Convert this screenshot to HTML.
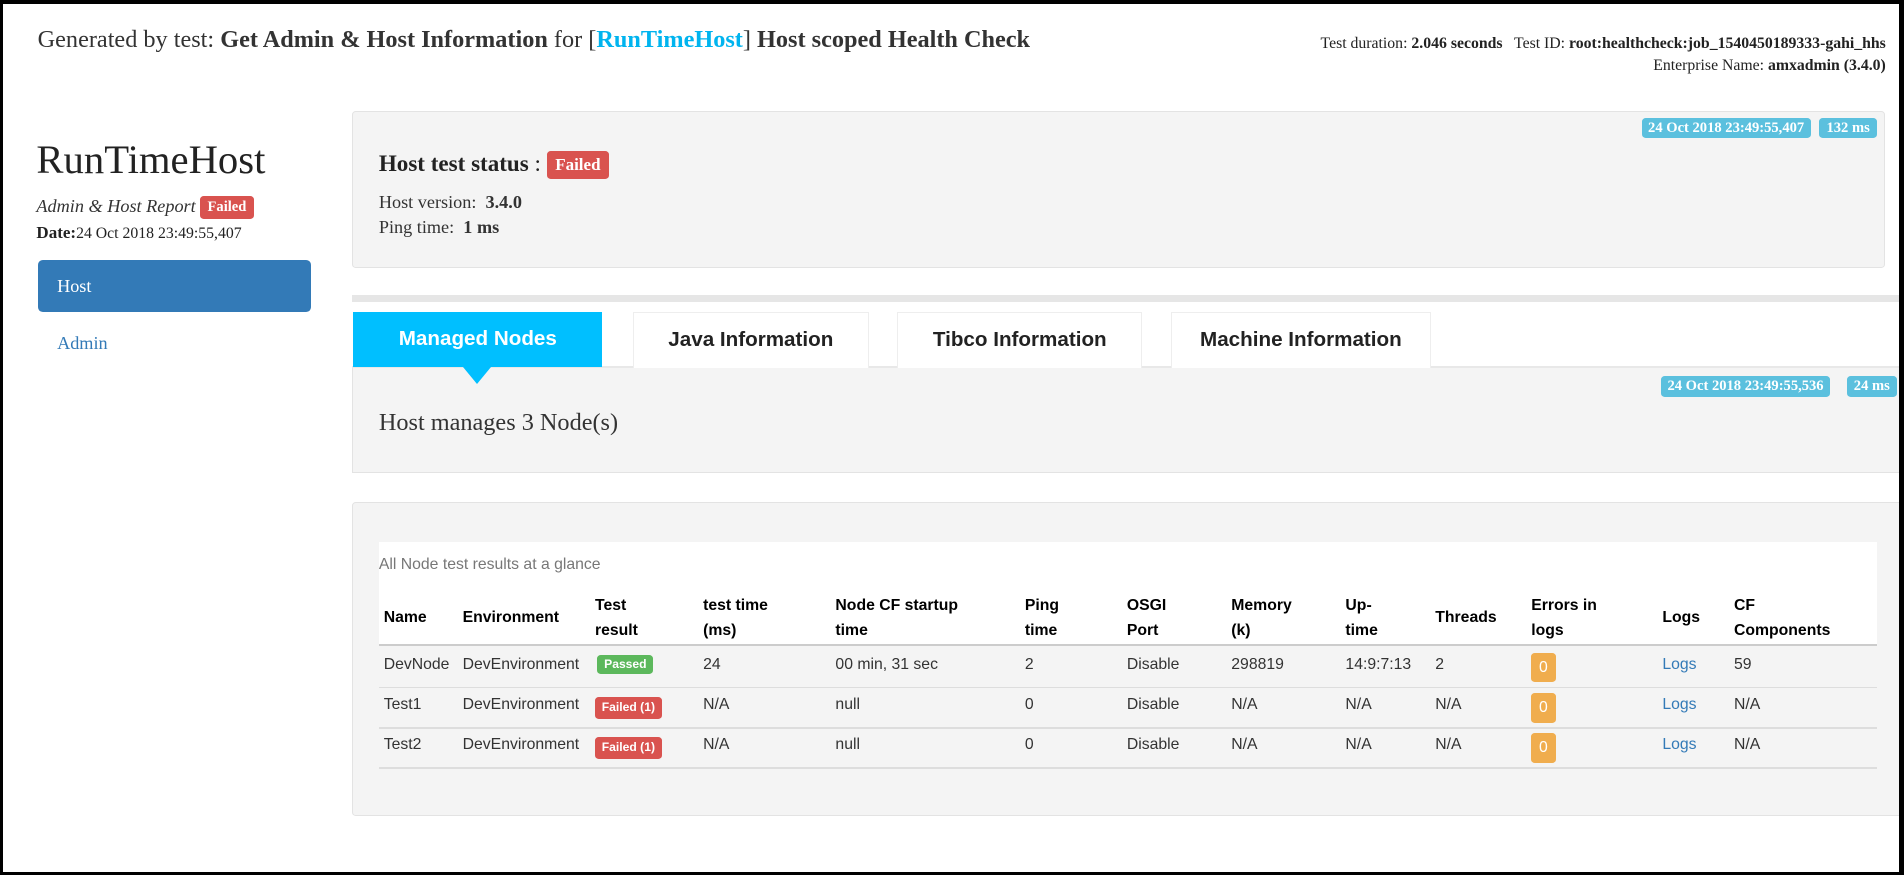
<!DOCTYPE html>
<html><head><meta charset="utf-8"><style>
html,body{margin:0;padding:0;background:#fff;}
body{width:1904px;height:875px;overflow:hidden;position:relative;}
#w{zoom:1.21429;position:absolute;left:0;top:0;width:1568px;height:721px;font-family:"Liberation Serif",serif;color:#333;}
.a{position:absolute;white-space:nowrap;}
.bd{position:absolute;background:#000;z-index:9;}
.lbl{display:inline-block;color:#fff;font-weight:bold;border-radius:3px;text-align:center;}
.info{position:absolute;background:#5bc0de;color:#fff;font-weight:bold;font-size:12px;height:17px;line-height:17px;border-radius:3px;text-align:center;font-family:"Liberation Serif",serif;}
.panel{position:absolute;background:#f4f4f4;border:1px solid #e3e3e3;border-radius:3px;}
.tab{position:absolute;top:257px;height:45px;line-height:45px;background:#fff;border:1px solid #eee;border-bottom:none;font-family:"Liberation Sans",sans-serif;font-weight:bold;font-size:17px;color:#222;text-align:center;}
.t{font-family:"Liberation Sans",sans-serif;font-size:13px;color:#333;}
.th{font-weight:bold;color:#000;line-height:21px;}
.err{position:absolute;width:20px;height:24px;background:#f0ad4e;border-radius:3px;color:#fff;text-align:center;line-height:24px;font-family:"Liberation Sans",sans-serif;font-size:13px;}
.hl{position:absolute;left:312px;width:1234px;height:1px;background:#ddd;}
</style></head><body>
<div class="bd" style="left:0;top:0;width:1904px;height:4px"></div>
<div class="bd" style="left:0;top:0;width:3px;height:875px"></div>
<div class="bd" style="left:0;bottom:0;width:1904px;height:3px"></div>
<div class="bd" style="right:0;top:0;width:5px;height:875px"></div>
<div id="w">
<div class="a" style="left:31px;top:21px;font-size:20px;">Generated by test: <b>Get Admin &amp; Host Information</b> for [<b style="color:#00b4ef">RunTimeHost</b>] <b>Host scoped Health Check</b></div>
<div class="a" style="right:15px;top:27px;font-size:13px;text-align:right;line-height:18px;color:#222">Test duration: <b>2.046 seconds</b> &nbsp; Test ID: <b>root:healthcheck:job_1540450189333-gahi_hhs</b><br>Enterprise Name: <b>amxadmin (3.4.0)</b></div>

<div class="a" style="left:30px;top:112px;font-size:33.5px;color:#222">RunTimeHost</div>
<div class="a" style="left:30px;top:161px;font-size:15px;font-style:italic">Admin &amp; Host Report <span class="lbl" style="background:#d9534f;font-style:normal;font-size:12px;padding:0 6px;height:19px;line-height:19px;vertical-align:1px">Failed</span></div>
<div class="a" style="left:30px;top:184px;font-size:13px;color:#222"><b style="font-size:14px">Date:</b>24 Oct 2018 23:49:55,407</div>
<div class="a" style="left:31px;top:214px;width:225px;height:43px;background:#337ab7;border-radius:4px;color:#fff;font-size:15px;line-height:43px;"><span style="margin-left:16px">Host</span></div>
<div class="a" style="left:47px;top:274px;font-size:15px;color:#337ab7">Admin</div>

<div class="panel" style="left:290px;top:91px;width:1261px;height:128px;"></div>
<div class="info" style="left:1352px;top:97px;width:139px;">24 Oct 2018 23:49:55,407</div>
<div class="info" style="left:1498px;top:97px;width:48px;">132 ms</div>
<div class="a" style="left:312px;top:123px;font-size:19px;font-weight:bold;color:#222;line-height:24px">Host test status <span style="font-weight:normal">:</span> <span class="lbl" style="background:#d9534f;font-size:14px;padding:0 7px;height:23px;line-height:23px;vertical-align:1px">Failed</span></div>
<div class="a" style="left:312px;top:158px;font-size:15px;">Host version: &nbsp;<b>3.4.0</b></div>
<div class="a" style="left:312px;top:179px;font-size:15px;">Ping time: &nbsp;<b>1 ms</b></div>

<div class="a" style="left:290px;top:243px;width:1274px;height:6px;background:#e6e6e6"></div>
<div class="panel" style="left:290px;top:302px;width:1280px;height:87px;border-radius:0;border-top:none"></div>
<div class="a" style="left:290px;top:301px;width:1280px;height:2px;background:#e8e8e8"></div>
<div class="tab" style="left:291px;width:205px;background:#00bfff;color:#fff;border:none;">Managed Nodes</div>
<div class="a" style="left:381px;top:302px;width:0;height:0;border-left:12px solid transparent;border-right:12px solid transparent;border-top:14px solid #00bfff"></div>
<div class="tab" style="left:521px;width:193px;">Java Information</div>
<div class="tab" style="left:739px;width:200px;">Tibco Information</div>
<div class="tab" style="left:964px;width:213px;">Machine Information</div>
<div class="info" style="left:1368px;top:310px;width:139px;">24 Oct 2018 23:49:55,536</div>
<div class="info" style="left:1521px;top:310px;width:41px;">24 ms</div>
<div class="a" style="left:312px;top:337px;font-size:20px;">Host manages 3 Node(s)</div>

<div class="panel" style="left:290px;top:413px;width:1280px;height:257px;"></div>
<div class="a" style="left:312px;top:446px;width:1234px;height:86px;background:#fff"></div>
<div class="a t" style="left:312px;top:458px;color:#777">All Node test results at a glance</div>
<div class="a" style="left:312px;top:530px;width:1234px;height:2px;background:#ccc"></div>
<div class="hl" style="top:566px"></div>
<div class="hl" style="top:599px"></div>
<div class="hl" style="top:632px"></div>
<div class="a t th" style="left:316px;top:498px">Name</div>
<div class="a t th" style="left:381px;top:498px">Environment</div>
<div class="a t th" style="left:490px;top:488px">Test<br>result</div>
<div class="a t th" style="left:579px;top:488px">test time<br>(ms)</div>
<div class="a t th" style="left:688px;top:488px">Node CF startup<br>time</div>
<div class="a t th" style="left:844px;top:488px">Ping<br>time</div>
<div class="a t th" style="left:928px;top:488px">OSGI<br>Port</div>
<div class="a t th" style="left:1014px;top:488px">Memory<br>(k)</div>
<div class="a t th" style="left:1108px;top:488px">Up-<br>time</div>
<div class="a t th" style="left:1182px;top:498px">Threads</div>
<div class="a t th" style="left:1261px;top:488px">Errors in<br>logs</div>
<div class="a t th" style="left:1369px;top:498px">Logs</div>
<div class="a t th" style="left:1428px;top:488px">CF<br>Components</div>

<div class="a t" style="left:316px;top:540px">DevNode</div><div class="a t" style="left:381px;top:540px">DevEnvironment</div>
<div class="a" style="left:492px;top:539px;width:46px;height:16px;background:#5cb85c;border-radius:3px;color:#fff;font:bold 10px/16px 'Liberation Sans',sans-serif;text-align:center">Passed</div>
<div class="a t" style="left:579px;top:540px">24</div><div class="a t" style="left:688px;top:540px">00 min, 31 sec</div><div class="a t" style="left:844px;top:540px">2</div><div class="a t" style="left:928px;top:540px">Disable</div><div class="a t" style="left:1014px;top:540px">298819</div><div class="a t" style="left:1108px;top:540px">14:9:7:13</div><div class="a t" style="left:1182px;top:540px">2</div>
<div class="err" style="left:1261px;top:538px">0</div><div class="a t" style="left:1369px;top:540px;color:#337ab7">Logs</div><div class="a t" style="left:1428px;top:540px">59</div>

<div class="a t" style="left:316px;top:573px">Test1</div><div class="a t" style="left:381px;top:573px">DevEnvironment</div>
<div class="a" style="left:490px;top:574px;width:55px;height:18px;background:#d9534f;border-radius:3px;color:#fff;font:bold 10px/18px 'Liberation Sans',sans-serif;text-align:center">Failed (1)</div>
<div class="a t" style="left:579px;top:573px">N/A</div><div class="a t" style="left:688px;top:573px">null</div><div class="a t" style="left:844px;top:573px">0</div><div class="a t" style="left:928px;top:573px">Disable</div><div class="a t" style="left:1014px;top:573px">N/A</div><div class="a t" style="left:1108px;top:573px">N/A</div><div class="a t" style="left:1182px;top:573px">N/A</div>
<div class="err" style="left:1261px;top:571px">0</div><div class="a t" style="left:1369px;top:573px;color:#337ab7">Logs</div><div class="a t" style="left:1428px;top:573px">N/A</div>

<div class="a t" style="left:316px;top:606px">Test2</div><div class="a t" style="left:381px;top:606px">DevEnvironment</div>
<div class="a" style="left:490px;top:607px;width:55px;height:18px;background:#d9534f;border-radius:3px;color:#fff;font:bold 10px/18px 'Liberation Sans',sans-serif;text-align:center">Failed (1)</div>
<div class="a t" style="left:579px;top:606px">N/A</div><div class="a t" style="left:688px;top:606px">null</div><div class="a t" style="left:844px;top:606px">0</div><div class="a t" style="left:928px;top:606px">Disable</div><div class="a t" style="left:1014px;top:606px">N/A</div><div class="a t" style="left:1108px;top:606px">N/A</div><div class="a t" style="left:1182px;top:606px">N/A</div>
<div class="err" style="left:1261px;top:604px">0</div><div class="a t" style="left:1369px;top:606px;color:#337ab7">Logs</div><div class="a t" style="left:1428px;top:606px">N/A</div>
</div>
</body></html>
